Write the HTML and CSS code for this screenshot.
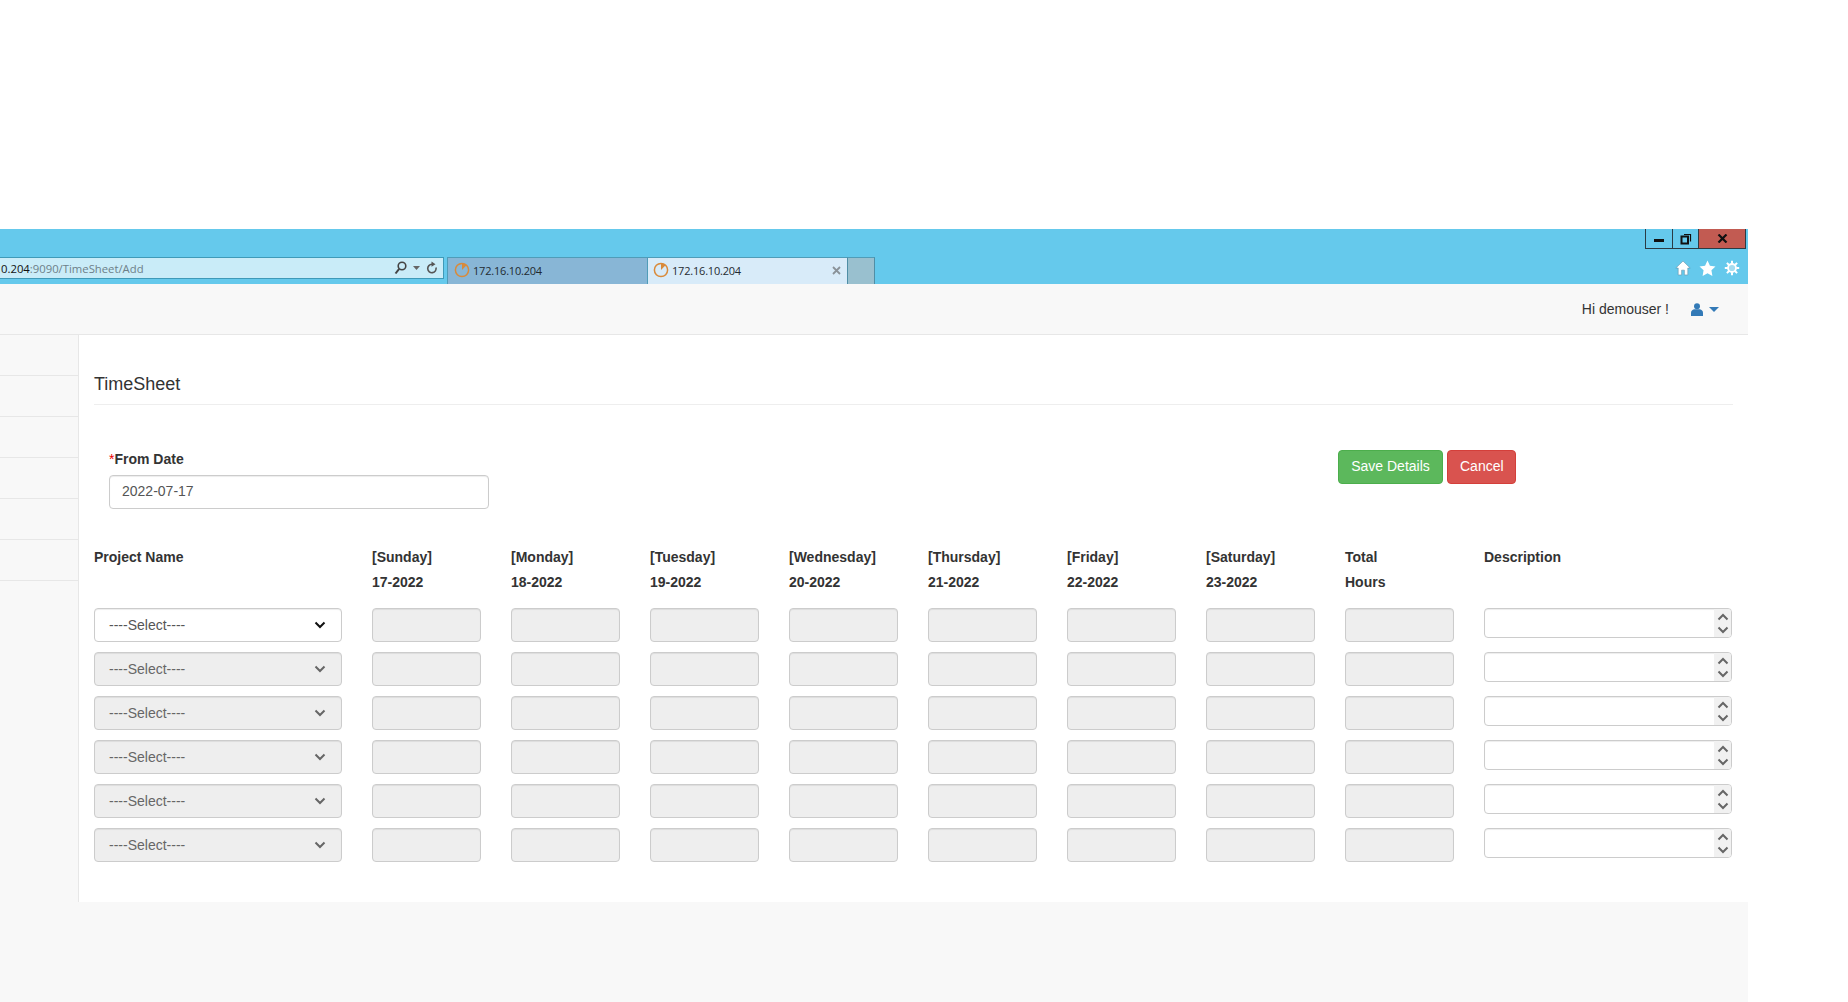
FILE: index.html
```html
<!DOCTYPE html>
<html lang="en">
<head>
<meta charset="utf-8">
<title>TimeSheet</title>
<link rel="stylesheet" href="styles.css">
</head>
<body>
<div class="frame">
  <div class="chrome">
    <div class="winbar">
      <div class="winctl min"><span class="minbar"></span></div>
      <div class="winctl rest">
        <svg width="12" height="12" viewBox="0 0 12 12"><path d="M4 1.500h6.500v7" fill="none" stroke="#111" stroke-width="1.200"/><rect x="1.500" y="3.500" width="6.500" height="7" fill="none" stroke="#111" stroke-width="2"/></svg>
      </div>
      <div class="winctl close">
        <svg width="11" height="9" viewBox="0 0 11 9"><path d="M1.500 .5l8 8M9.500 .5l-8 8" stroke="#111" stroke-width="2.200"/></svg>
      </div>
    </div>
    <div class="toolbar">
      <div class="address">
        <span class="url"><span class="host">0.204</span>:9090/TimeSheet/Add</span>
        <span class="addr-tools">
          <svg width="13" height="14" viewBox="0 0 13 14"><circle cx="8" cy="5" r="3.800" fill="none" stroke="#444" stroke-width="1.600"/><path d="M5.200 7.800L1.500 12.500" stroke="#444" stroke-width="2"/></svg>
          <svg width="7" height="4" viewBox="0 0 7 4"><path d="M0 0h7L3.500 4z" fill="#666"/></svg>
          <svg width="12" height="14" viewBox="0 0 12 14"><path d="M10 6.500A4.200 4.200 0 1 1 6 3.300" fill="none" stroke="#555" stroke-width="1.600"/><path d="M5.500 .5l4 2.800-4 2.500z" fill="#555"/></svg>
        </span>
      </div>
      <div class="tab inactive">
        <svg class="fav" width="16" height="16" viewBox="0 0 16 16"><circle cx="8" cy="8" r="6.600" fill="none" stroke="#d98a3a" stroke-width="1.500"/><path d="M8 8V1.500A6.500 6.500 0 0 1 12.500 3.300z" fill="#d98a3a"/></svg>
        <span class="tabtext">172.16.10.204</span>
      </div>
      <div class="tab active">
        <svg class="fav" width="16" height="16" viewBox="0 0 16 16"><circle cx="8" cy="8" r="6.600" fill="none" stroke="#d98a3a" stroke-width="1.500"/><path d="M8 8V1.500A6.500 6.500 0 0 1 12.500 3.300z" fill="#d98a3a"/></svg>
        <span class="tabtext">172.16.10.204</span>
        <svg class="tabx" width="9" height="9" viewBox="0 0 9 9"><path d="M1 1l7 7M8 1l-7 7" stroke="#8a9299" stroke-width="1.800"/></svg>
      </div>
      <div class="tab newtab"></div>
      <div class="tools">
        <svg width="16" height="16" viewBox="0 0 15 15"><path d="M7.500 1L.8 7.500h2.200V14h3.200V9.500h2.600V14H12V7.500h2.200z" fill="#fff" stroke="#5a8aa0" stroke-width=".5"/></svg>
        <svg width="17" height="16" viewBox="0 0 16 15"><path d="M8 .5l2.300 4.900 5.200.7-3.800 3.600.9 5.300L8 12.400 3.400 15l.9-5.300L.5 6.100l5.200-.7z" fill="#fff"/></svg>
        <svg width="16" height="16" viewBox="0 0 16 16"><circle cx="8" cy="8" r="4" fill="#a6dcef" stroke="#fff" stroke-width="1.800"/><path d="M8 .8v3M8 12.200v3M.8 8h3M12.200 8h3M2.900 2.900L5 5M11 11l2.100 2.100M13.100 2.900L11 5M5 11l-2.100 2.100" stroke="#fff" stroke-width="2"/></svg>
      </div>
    </div>
  </div>
  <nav class="navbar">
    <span class="hello">Hi demouser !</span>
    <svg class="user" width="12" height="13" viewBox="0 0 12 13"><circle cx="6" cy="3.200" r="3" fill="#337ab7"/><path d="M0 13V9.500C0 7.500 2 6.500 3.500 6.300h5C10 6.500 12 7.500 12 9.500V13z" fill="#337ab7"/></svg>
    <span class="caret"></span>
  </nav>
  <div class="main">
    <aside class="sidebar">
      <div class="side-row"></div>
      <div class="side-row"></div>
      <div class="side-row"></div>
      <div class="side-row"></div>
      <div class="side-row"></div>
      <div class="side-row"></div>
    </aside>
    <section class="content">
      <h1 class="title">TimeSheet</h1>
      <div class="top-form">
        <div class="date-group">
          <label class="lbl"><span class="req">*</span>From Date</label>
          <input class="ctl date" type="text" value="2022-07-17">
        </div>
        <div class="actions">
          <button class="btn save">Save Details</button>
          <button class="btn cancel">Cancel</button>
        </div>
      </div>
      <div class="grid">
        <div class="head">Project Name</div>
        <div class="head">[Sunday]<br>17-2022</div>
        <div class="head">[Monday]<br>18-2022</div>
        <div class="head">[Tuesday]<br>19-2022</div>
        <div class="head">[Wednesday]<br>20-2022</div>
        <div class="head">[Thursday]<br>21-2022</div>
        <div class="head">[Friday]<br>22-2022</div>
        <div class="head">[Saturday]<br>23-2022</div>
        <div class="head">Total<br>Hours</div>
        <div class="head">Description</div>

        <div class="ctl select on">----Select----<svg class="chev" width="12" height="8" viewBox="0 0 12 8"><path d="M1.500 1.500L6 6l4.500-4.500" fill="none" stroke="#111" stroke-width="2"/></svg></div>
        <div class="ctl off"></div><div class="ctl off"></div><div class="ctl off"></div><div class="ctl off"></div><div class="ctl off"></div><div class="ctl off"></div><div class="ctl off"></div><div class="ctl off"></div>
        <div class="ctl desc"><span class="spin"><svg width="12" height="28" viewBox="0 0 12 28"><path d="M1.500 10.500L6 6l4.500 4.500M1.500 18.500L6 23l4.500-4.500" fill="none" stroke="#666" stroke-width="2"/></svg></span></div>

        <div class="ctl select">----Select----<svg class="chev" width="12" height="8" viewBox="0 0 12 8"><path d="M1.500 1.500L6 6l4.500-4.500" fill="none" stroke="#666" stroke-width="2"/></svg></div>
        <div class="ctl off"></div><div class="ctl off"></div><div class="ctl off"></div><div class="ctl off"></div><div class="ctl off"></div><div class="ctl off"></div><div class="ctl off"></div><div class="ctl off"></div>
        <div class="ctl desc"><span class="spin"><svg width="12" height="28" viewBox="0 0 12 28"><path d="M1.500 10.500L6 6l4.500 4.500M1.500 18.500L6 23l4.500-4.500" fill="none" stroke="#666" stroke-width="2"/></svg></span></div>

        <div class="ctl select">----Select----<svg class="chev" width="12" height="8" viewBox="0 0 12 8"><path d="M1.500 1.500L6 6l4.500-4.500" fill="none" stroke="#666" stroke-width="2"/></svg></div>
        <div class="ctl off"></div><div class="ctl off"></div><div class="ctl off"></div><div class="ctl off"></div><div class="ctl off"></div><div class="ctl off"></div><div class="ctl off"></div><div class="ctl off"></div>
        <div class="ctl desc"><span class="spin"><svg width="12" height="28" viewBox="0 0 12 28"><path d="M1.500 10.500L6 6l4.500 4.500M1.500 18.500L6 23l4.500-4.500" fill="none" stroke="#666" stroke-width="2"/></svg></span></div>

        <div class="ctl select">----Select----<svg class="chev" width="12" height="8" viewBox="0 0 12 8"><path d="M1.500 1.500L6 6l4.500-4.500" fill="none" stroke="#666" stroke-width="2"/></svg></div>
        <div class="ctl off"></div><div class="ctl off"></div><div class="ctl off"></div><div class="ctl off"></div><div class="ctl off"></div><div class="ctl off"></div><div class="ctl off"></div><div class="ctl off"></div>
        <div class="ctl desc"><span class="spin"><svg width="12" height="28" viewBox="0 0 12 28"><path d="M1.500 10.500L6 6l4.500 4.500M1.500 18.500L6 23l4.500-4.500" fill="none" stroke="#666" stroke-width="2"/></svg></span></div>

        <div class="ctl select">----Select----<svg class="chev" width="12" height="8" viewBox="0 0 12 8"><path d="M1.500 1.500L6 6l4.500-4.500" fill="none" stroke="#666" stroke-width="2"/></svg></div>
        <div class="ctl off"></div><div class="ctl off"></div><div class="ctl off"></div><div class="ctl off"></div><div class="ctl off"></div><div class="ctl off"></div><div class="ctl off"></div><div class="ctl off"></div>
        <div class="ctl desc"><span class="spin"><svg width="12" height="28" viewBox="0 0 12 28"><path d="M1.500 10.500L6 6l4.500 4.500M1.500 18.500L6 23l4.500-4.500" fill="none" stroke="#666" stroke-width="2"/></svg></span></div>

        <div class="ctl select">----Select----<svg class="chev" width="12" height="8" viewBox="0 0 12 8"><path d="M1.500 1.500L6 6l4.500-4.500" fill="none" stroke="#666" stroke-width="2"/></svg></div>
        <div class="ctl off"></div><div class="ctl off"></div><div class="ctl off"></div><div class="ctl off"></div><div class="ctl off"></div><div class="ctl off"></div><div class="ctl off"></div><div class="ctl off"></div>
        <div class="ctl desc"><span class="spin"><svg width="12" height="28" viewBox="0 0 12 28"><path d="M1.500 10.500L6 6l4.500 4.500M1.500 18.500L6 23l4.500-4.500" fill="none" stroke="#666" stroke-width="2"/></svg></span></div>
      </div>
    </section>
  </div>
  <div class="footer"></div>
</div>
</body>
</html>
```
FILE: styles.css
```css
* { box-sizing: border-box; }
html, body { margin: 0; height: 100%; background: #fff; overflow: hidden; }
body { padding-top: 229px; font-family: "Liberation Sans", Arial, sans-serif; font-size: 14px; color: #333; }
.frame { width: 1748px; height: 773px; display: flex; flex-direction: column; background: #f8f8f8; }

.chrome { height: 55px; background: #65c9ec; position: relative; flex: none; }
.winbar { position: absolute; top: 0; right: 2px; height: 20px; display: flex; border: 1px solid #2b3b44; border-top: 0; }
.winctl { display: flex; align-items: center; justify-content: center; height: 19px; }
.min { width: 27px; border-right: 1px solid #2b3b44; }
.minbar { width: 10px; height: 3px; background: #111; margin-top: 3px; }
.rest { width: 26px; border-right: 1px solid #2b3b44; }
.close { width: 46px; background: #c25b52; }

.toolbar { position: absolute; left: 0; right: 0; top: 28px; height: 27px; display: flex; align-items: flex-start; }
.address { width: 444px; height: 22px; background: #c9ecf8; border: 1px solid #3f9ab8; border-left: 0; display: flex; align-items: center; justify-content: space-between; padding-right: 5px; font-family: "Open Sans", sans-serif; font-size: 11.300px; color: #6d7f88; white-space: nowrap; margin-right: 3px; }
.host { color: #111; }
.url { margin-left: 1px; }
.addr-tools { display: flex; align-items: center; gap: 6px; }
.tab { height: 27px; display: flex; align-items: center; padding-bottom: 2px; border-top: 1px solid #4f9cb8; font-family: "Open Sans", sans-serif; font-size: 11px; color: #1f2a30; }
.inactive { width: 200px; padding-left: 6px; background: #88b6d6; border-left: 1px solid #4f9cb8; }
.active { width: 200px; padding-left: 5px; padding-right: 5px; background: #d8ebf9; border-left: 1px solid #4f9cb8; }
.newtab { width: 28px; background: #99c0cf; border-left: 1px solid #4f8ea6; border-right: 1px solid #4f8ea6; }
.fav { flex: none; margin-right: 3px; }
.tabtext { letter-spacing: -.2px; flex: 1; }
.tabx { flex: none; margin-right: 1px; }
.tools { margin-left: auto; display: flex; align-items: center; gap: 8px; padding-right: 8px; height: 24px; margin-top: -1px; }

.navbar { height: 51px; flex: none; display: flex; align-items: center; justify-content: flex-end; padding-right: 29px; background: #f8f8f8; border-bottom: 1px solid #e7e7e7; }
.hello { margin-right: 22px; }
.user { margin-right: 6px; }
.caret { width: 0; height: 0; border-left: 5px solid transparent; border-right: 5px solid transparent; border-top: 5px solid #337ab7; }

.main { display: flex; height: 567px; flex: none; }
.sidebar { width: 79px; flex: none; background: #f8f8f8; border-right: 1px solid #e7e7e7; }
.side-row { height: 41px; border-bottom: 1px solid #e7e7e7; }
.content { flex: 1; background: #fff; padding: 0 15px; }
.title { margin: 0; padding: 39px 0 10px; height: 70px; font-size: 18px; line-height: 20px; font-weight: 400; color: #333; border-bottom: 1px solid #eee; }

.top-form { display: flex; justify-content: space-between; padding: 44px 0 0 15px; height: 138px; }
.date-group { width: 380px; }
.lbl { display: block; font-weight: 700; line-height: 20px; margin-bottom: 6px; }
.req { color: #e00; font-weight: 400; }
.actions { display: flex; gap: 4px; width: 395px; height: 34px; margin-top: 1px; }
.btn { font: inherit; height: 34px; padding: 0 12px 2px; border-radius: 4px; color: #fff; cursor: pointer; }
.save { width: 105px; background: #5cb85c; border: 1px solid #4cae4c; }
.cancel { width: 69px; background: #d9534f; border: 1px solid #d43f3a; }

.ctl { border: 1px solid #ccc; border-radius: 4px; height: 34px; box-shadow: inset 0 1px 1px rgba(0,0,0,.075); font: inherit; color: #555; }
.date { display: block; width: 100%; padding: 5px 12px 7px; background: #fff; }

.grid { display: grid; grid-template-columns: 248px repeat(8, 109px) 248px; column-gap: 30px; row-gap: 10px; align-items: start; }
.head { font-weight: 700; line-height: 25px; height: 55px; padding-top: 2px; }
.select { display: flex; align-items: center; justify-content: space-between; padding: 0 15px 0 14px; background: #eee; color: #666; }
.select.on { background: #fff; color: #555; }
.off { background: #eee; }
.desc { height: 30px; background: #fff; display: flex; justify-content: flex-end; overflow: hidden; }
.spin { width: 17px; height: 28px; background: #f1f1f1; display: flex; align-items: center; justify-content: center; }

.footer { flex: 1; background: #f8f8f8; }
```
